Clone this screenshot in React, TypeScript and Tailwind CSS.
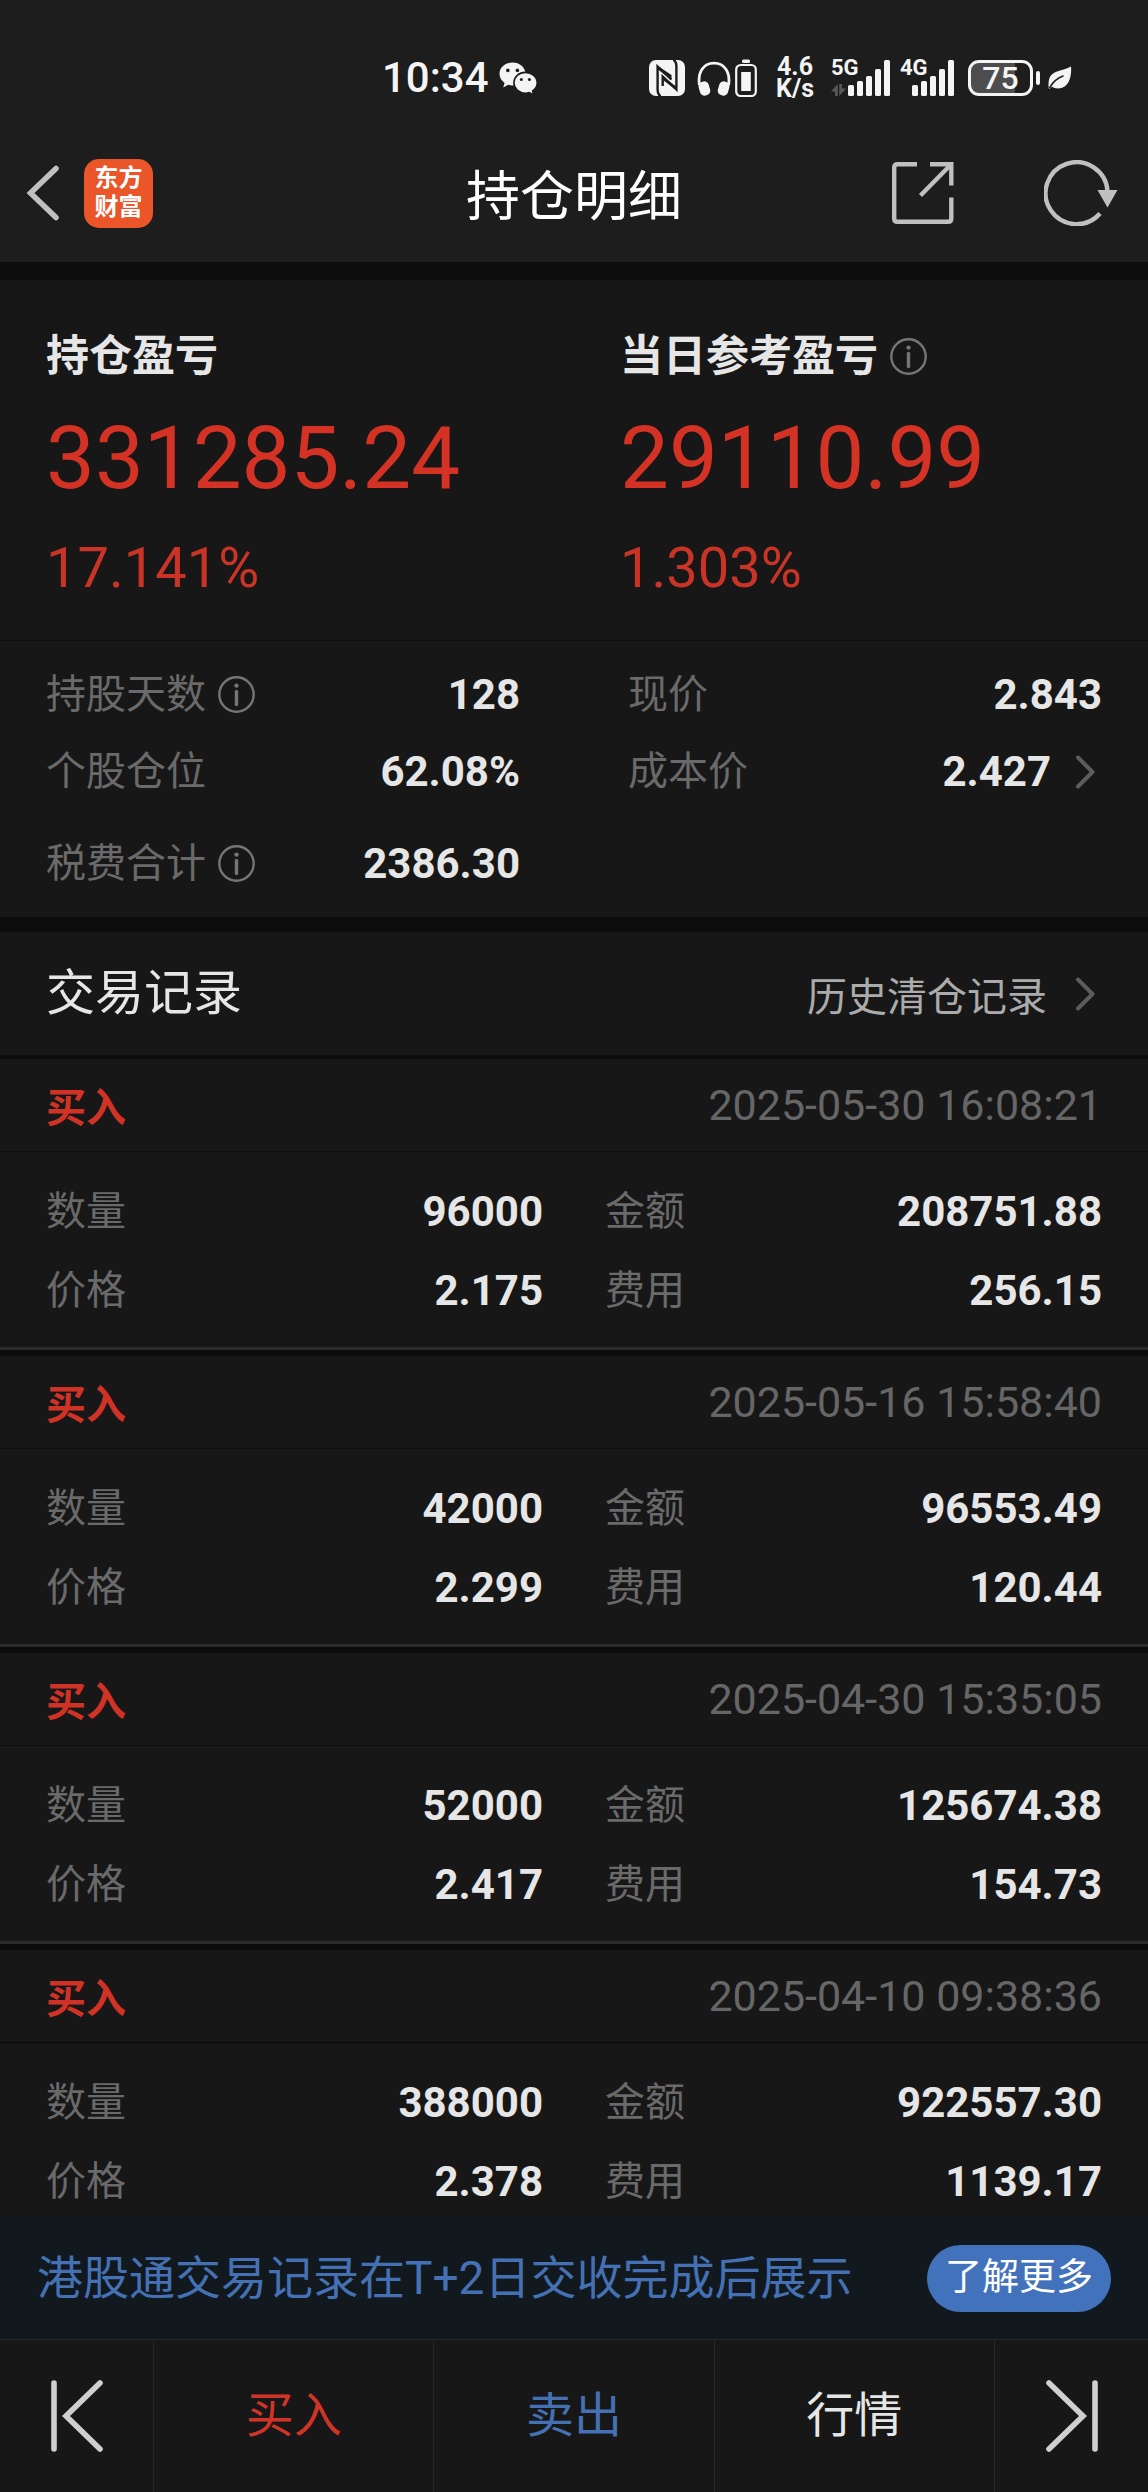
import type { ReactNode } from 'react';

type Trade = {
  side: string;
  time: string;
  quantity: string;
  amount: string;
  price: string;
  fee: string;
};

const trades: Trade[] = [
  { side: '买入', time: '2025-05-30 16:08:21', quantity: '96000', amount: '208751.88', price: '2.175', fee: '256.15' },
  { side: '买入', time: '2025-05-16 15:58:40', quantity: '42000', amount: '96553.49', price: '2.299', fee: '120.44' },
  { side: '买入', time: '2025-04-30 15:35:05', quantity: '52000', amount: '125674.38', price: '2.417', fee: '154.73' },
  { side: '买入', time: '2025-04-10 09:38:36', quantity: '388000', amount: '922557.30', price: '2.378', fee: '1139.17' },
];

function InfoIcon() {
  return (
    <svg width="37" height="37" viewBox="0 0 37 37" fill="none" stroke="#757575" aria-hidden="true">
      <circle cx="18.5" cy="18.5" r="17.2" strokeWidth="2.4" />
      <circle cx="18.5" cy="9.6" r="2.2" fill="#757575" stroke="none" />
      <path d="M18.5 15.5V28.5" strokeWidth="3.4" strokeLinecap="round" />
    </svg>
  );
}

function ChevronIcon() {
  return (
    <svg width="20" height="34" viewBox="0 0 20 34" fill="none" stroke="#5c5c5c" strokeWidth="4" strokeLinecap="round" strokeLinejoin="round" aria-hidden="true">
      <path d="M3 2.5L17.5 17L3 31.5" />
    </svg>
  );
}

function WechatIcon() {
  return (
    <svg width="39" height="33" viewBox="0 0 39 33" aria-hidden="true">
      <path d="M13.5 0.5C6.3 0.5 0.5 5.2 0.5 11.8C0.5 15.6 2.5 18.8 5.6 20.9L4.2 25.4L9.2 22.8C10.6 23.2 12 23.4 13.5 23.4C20.7 23.4 26.5 18.4 26.5 11.9C26.5 5.4 20.7 0.5 13.5 0.5Z" fill="#f4f4f4" />
      <path d="M26.4 10.4C20 10.4 14.9 14.9 14.9 20.8C14.9 26.7 20 31.2 26.4 31.2C27.8 31.2 29 31 30.2 30.6L34.6 32.8L33.6 28.9C36.4 27 38.2 24.1 38.2 20.8C38.2 14.9 32.8 10.4 26.4 10.4Z" fill="#f4f4f4" stroke="#1d1d1d" strokeWidth="1.6" />
      <g fill="#1d1d1d">
        <circle cx="8.8" cy="8.4" r="1.8" />
        <circle cx="18.4" cy="8.4" r="1.8" />
        <circle cx="22.3" cy="17.6" r="1.5" />
        <circle cx="30.4" cy="17.6" r="1.5" />
      </g>
    </svg>
  );
}

function NfcIcon() {
  return (
    <svg width="36" height="36" viewBox="0 0 36 36" aria-hidden="true">
      <rect width="36" height="36" rx="7" fill="#f4f4f4" />
      <g fill="none" stroke="#1d1d1d" strokeLinejoin="miter">
        <path d="M11.5 36.5C9 34.5 8.6 33 8.6 30V6.5L22.3 19.5" strokeWidth="2.4" />
        <path d="M24.5 -0.5C27 1.5 27.4 3 27.4 6V29.5L13.7 16.5V26" strokeWidth="2.4" />
      </g>
      <path d="M9 6L22.5 15V19.8L9 9.5ZM27 30L14 20V16.5L27 26.5Z" fill="#1d1d1d" />
    </svg>
  );
}

function HeadphonesIcon() {
  return (
    <svg width="34" height="35" viewBox="0 0 34 35" aria-hidden="true">
      <path d="M2.4 24C0.5 11 6.5 2.2 17 2.2C27.5 2.2 33.5 11 31.6 24" fill="none" stroke="#f4f4f4" strokeWidth="2.8" />
      <g fill="#f4f4f4">
        <rect x="2.2" y="20.5" width="10.4" height="14" rx="4.4" transform="rotate(-16 7.4 27.5)" />
        <rect x="21.4" y="20.5" width="10.4" height="14" rx="4.4" transform="rotate(16 26.6 27.5)" />
      </g>
    </svg>
  );
}

function DeviceBatteryIcon() {
  return (
    <svg width="22" height="38" viewBox="0 0 22 38" aria-hidden="true">
      <rect x="7" y="0.5" width="8" height="3.5" rx="1.5" fill="#f4f4f4" />
      <rect x="1.2" y="6" width="19.6" height="31" rx="4.5" fill="none" stroke="#f4f4f4" strokeWidth="2.2" />
      <rect x="6.2" y="13" width="9.6" height="19" fill="#f4f4f4" />
    </svg>
  );
}

function SignalIcon() {
  return (
    <svg width="42" height="36" viewBox="0 0 42 36" fill="#f4f4f4" aria-hidden="true">
      <rect x="0" y="25" width="6" height="11" rx="1.5" />
      <rect x="9" y="21" width="6" height="15" rx="1.5" />
      <rect x="18" y="16" width="6" height="20" rx="1.5" />
      <rect x="27" y="9" width="6" height="27" rx="1.5" />
      <rect x="36" y="0" width="6" height="36" rx="1.5" />
    </svg>
  );
}

function DataArrowsIcon() {
  return (
    <svg width="15" height="12" viewBox="0 0 15 12" fill="#585858" aria-hidden="true">
      <path d="M6.8 0V12H4V7.5H0Z" />
      <path d="M8.2 12V0H11V4.5H15Z" />
    </svg>
  );
}

function LeafIcon() {
  return (
    <svg width="24" height="24" viewBox="0 0 24 24" aria-hidden="true">
      <path d="M23 0.5C24 11 20.5 22.5 10 22.5C7.5 22.5 5.6 22 4.2 20.8C2.6 22 1.8 22.6 1 23C0.4 21 0.3 17 1 13.5C3 4.5 13 5.5 23 0.5Z" fill="#f4f4f4" />
      <path d="M1.5 22C5 15.5 9.5 12 15.5 9.8" fill="none" stroke="#1d1d1d" strokeWidth="1.6" />
    </svg>
  );
}

function StatusBar() {
  return (
    <div className="flex h-[124px] items-center pt-8 pr-[76px] pl-[382px] text-[#f4f4f4]">
      <span className="text-[42px] leading-[48px] font-medium">10:34</span>
      <span className="ml-[10px]">
        <WechatIcon />
      </span>
      <div className="ml-auto flex items-center">
        <NfcIcon />
        <span className="ml-3">
          <HeadphonesIcon />
        </span>
        <span className="ml-1">
          <DeviceBatteryIcon />
        </span>
        <div className="ml-[18px] flex w-10 flex-col text-center text-[25px] leading-[22px] font-bold">
          <span>4.6</span>
          <span>K/s</span>
        </div>
        <div className="relative ml-4 flex w-[59px] justify-end">
          <span className="absolute top-0 left-0 text-[22px] leading-4 font-bold">5G</span>
          <span className="absolute bottom-0 left-0">
            <DataArrowsIcon />
          </span>
          <SignalIcon />
        </div>
        <div className="relative ml-[10px] flex w-[54px] justify-end">
          <span className="absolute top-0 left-0 text-[22px] leading-4 font-bold">4G</span>
          <SignalIcon />
        </div>
        <div className="ml-[14px] flex h-9 w-[65px] items-center justify-center rounded-[11px] border-3 border-[#f4f4f4] bg-linear-to-r from-[#4d4d4d] from-75% to-[#1d1d1d] to-75% text-[32px] leading-8 font-medium">
          75
        </div>
        <div className="ml-[3px] h-[14px] w-1 rounded-full bg-[#f4f4f4]" />
        <span className="ml-2">
          <LeafIcon />
        </span>
      </div>
    </div>
  );
}

function Header() {
  return (
    <header className="bg-[#1d1d1d]">
      <StatusBar />
      <div className="grid h-[138px] grid-cols-[1fr_auto_1fr] items-center">
        <div className="flex items-center gap-6 pl-[26px]">
          <button type="button" aria-label="返回">
            <svg width="34" height="56" viewBox="0 0 34 56" fill="none" stroke="#c0c0c0" strokeWidth="5.5" strokeLinecap="round" strokeLinejoin="miter">
              <path d="M30 3.5L4.5 28L30 52.5" />
            </svg>
          </button>
          <a href="#home" className="flex size-[69px] flex-col items-center justify-center rounded-[15px] bg-[#ea552a] text-[24px] leading-[29px] font-bold text-white">
            <span>东方</span>
            <span>财富</span>
          </a>
        </div>
        <h1 className="font-['Noto_Sans_CJK_SC',sans-serif] text-[54px] leading-[64px] text-white">持仓明细</h1>
        <div className="flex items-center justify-end gap-[90px] pr-[30px]">
          <button type="button" aria-label="分享">
            <svg width="62" height="62" viewBox="0 0 62 62" fill="none" stroke="#c0c0c0" strokeWidth="4.4">
              <path d="M25 2.2H5.5Q2.2 2.2 2.2 5.5V56.5Q2.2 59.8 5.5 59.8H56Q59.3 59.8 59.3 56.5V35.5" />
              <path d="M38 2.2H59.3V23.5" />
              <path d="M58.5 3L28.5 33.5" />
            </svg>
          </button>
          <button type="button" aria-label="刷新">
            <svg width="74" height="66" viewBox="0 0 74 66" fill="none" stroke="#c0c0c0" strokeWidth="4.4">
              <path d="M56 53.5A31 31 0 1 1 63.5 31" />
              <path d="M53.5 30H73.5L63.5 47.5Z" fill="#c0c0c0" stroke="none" />
            </svg>
          </button>
        </div>
      </div>
    </header>
  );
}

function Profit({ label, value, percent, info }: { label: string; value: string; percent: string; info?: boolean }) {
  return (
    <div className="px-[46px] pt-[46px] pb-[42px]">
      <h2 className="flex items-center gap-3 text-[43px] leading-[60px] font-bold text-[#e6e6e6]">
        {label}
        {info && <InfoIcon />}
      </h2>
      <p className="mt-7 text-[87px] leading-[88px] text-[#d43224]">{value}</p>
      <p className="mt-9 text-[56px] leading-[60px] text-[#c93427]">{percent}</p>
    </div>
  );
}

function Pair({ label, value, info, link, className }: { label: string; value: string; info?: boolean; link?: boolean; className: string }) {
  return (
    <div className={`flex items-center ${className}`}>
      <dt className="flex items-center gap-3 text-[40px] leading-[48px] text-[#6a6a6a]">
        {label}
        {info && <InfoIcon />}
      </dt>
      <dd className="ml-auto flex items-center gap-6 text-[42px] leading-[48px] font-bold text-[#e6e6e6]">
        {value}
        {link && (
          <span className="mr-[7px]">
            <ChevronIcon />
          </span>
        )}
      </dd>
    </div>
  );
}

function TradeCard({ trade }: { trade: Trade }) {
  return (
    <article className="border-b-6 border-[#0c0c0c]">
      <div className="border-b-3 border-[#2b2b2b]">
        <div className="flex h-[93px] items-center justify-between border-b border-[#0c0c0c] px-[46px]">
          <h3 className="font-['Noto_Sans_CJK_SC',sans-serif] text-[40px] leading-[48px] font-bold text-[#d03326]">{trade.side}</h3>
          <time className="text-[43px] leading-[48px] text-[#666666]">{trade.time}</time>
        </div>
        <dl className="grid grid-cols-2 gap-x-[62px] px-[46px] pt-5 pb-[17px]">
          <Pair className="h-[79px]" label="数量" value={trade.quantity} />
          <Pair className="h-[79px]" label="金额" value={trade.amount} />
          <Pair className="h-[79px]" label="价格" value={trade.price} />
          <Pair className="h-[79px]" label="费用" value={trade.fee} />
        </dl>
      </div>
    </article>
  );
}

function TabButton({ children, className }: { children: ReactNode; className: string }) {
  return (
    <button type="button" className={`flex items-center justify-center text-[48px] leading-[56px] ${className}`}>
      {children}
    </button>
  );
}

function Footer() {
  return (
    <footer>
      <div className="flex h-[122px] items-center justify-between bg-[#11191f] px-[37px]">
        <p className="text-[46px] leading-[56px] text-[#4571b4]">港股通交易记录在T+2日交收完成后展示</p>
        <button type="button" className="h-[67px] w-[184px] rounded-full bg-[#4372bc] text-[37px] leading-[48px] text-white">
          了解更多
        </button>
      </div>
      <nav className="grid h-[153px] grid-cols-[154px_1fr_1fr_1fr_153px] divide-x divide-[#272727] border-t border-[#272727] bg-[#171717]">
        <TabButton className="text-[#cfcfcf]">
          <svg width="52" height="72" viewBox="0 0 52 72" fill="none" stroke="currentColor" strokeWidth="5.6" strokeLinecap="round" role="img" aria-label="上一个">
            <path d="M3 3V69M49 3L15 36L49 69" />
          </svg>
        </TabButton>
        <TabButton className="text-[#cf3427]">买入</TabButton>
        <TabButton className="text-[#4571b4]">卖出</TabButton>
        <TabButton className="text-[#e6e6e6]">行情</TabButton>
        <TabButton className="text-[#cfcfcf]">
          <svg width="52" height="72" viewBox="0 0 52 72" fill="none" stroke="currentColor" strokeWidth="5.6" strokeLinecap="round" role="img" aria-label="下一个">
            <path d="M49 3V69M3 3L37 36L3 69" />
          </svg>
        </TabButton>
      </nav>
    </footer>
  );
}

export default function App() {
  return (
    <div lang="zh-CN" className="flex h-screen flex-col bg-[#0c0c0c] font-['Roboto','Noto_Sans_CJK_SC',sans-serif]">
      <Header />

      <main className="mt-[18px] min-h-0 flex-1 overflow-y-auto [scrollbar-width:none]">
        <section className="bg-[#171717]">
          <div className="grid grid-cols-2 border-b border-[#0c0c0c]">
            <Profit label="持仓盈亏" value="331285.24" percent="17.141%" />
            <Profit label="当日参考盈亏" value="29110.99" percent="1.303%" info />
          </div>
          <dl className="grid grid-cols-2 gap-x-[108px] px-[46px] py-[15px]">
            <Pair className="h-[77px]" label="持股天数" value="128" info />
            <Pair className="h-[77px]" label="现价" value="2.843" />
            <Pair className="h-[77px]" label="个股仓位" value="62.08%" />
            <Pair className="h-[77px]" label="成本价" value="2.427" link />
            <Pair className="mt-[15px] h-[77px]" label="税费合计" value="2386.30" info />
          </dl>
        </section>

        <section className="mt-[15px] bg-[#171717]">
          <div className="flex h-[127px] items-center justify-between border-b-4 border-[#0c0c0c] px-[46px]">
            <h2 className="text-[49px] leading-[56px] text-[#e6e6e6]">交易记录</h2>
            <a href="#history" className="flex items-center gap-7 pr-[7px] font-['Noto_Sans_CJK_SC',sans-serif] text-[40px] leading-[48px] text-[#ababab]">
              历史清仓记录
              <ChevronIcon />
            </a>
          </div>
          {trades.map((trade) => (
            <TradeCard key={trade.time} trade={trade} />
          ))}
        </section>
      </main>

      <Footer />
    </div>
  );
}
